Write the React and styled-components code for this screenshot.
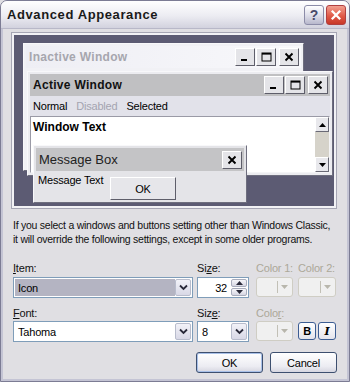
import React from 'react'
import styled, { createGlobalStyle } from 'styled-components'

const GlobalStyle = createGlobalStyle`
  html, body { margin: 0; padding: 0; background: #e0dfe3; }
  body { font-family: "Liberation Sans", Arial, sans-serif; font-size: 11px; letter-spacing: -0.2px; color: #000; }
  * { box-sizing: border-box; }
`

const Dialog = styled.div`
  width: 350px;
  height: 382px;
  display: flex;
  flex-direction: column;
  background: #e0dfe3;
  border: 1px solid #7c7c94;
  border-radius: 7px 7px 0 0;
  box-shadow: inset 2px 0 0 #c4c4d4, inset -2px 0 0 #c4c4d4, inset 0 -2px 0 #c4c4d4;
  overflow: hidden;
`

const TitleBar = styled.div`
  height: 28px;
  display: flex;
  align-items: center;
  padding: 0 3px 0 6px;
  background: linear-gradient(#ffffff, #ececf2 55%, #d2d2de);
  border-bottom: 1px solid #b8b8c8;
`

const Title = styled.div`
  flex: 1;
  font-weight: bold;
  font-size: 13px;
  letter-spacing: 0.6px;
  color: #1a1a1a;
`

const CaptionButton = styled.div`
  width: 20px;
  height: 20px;
  margin-left: 2px;
  border-radius: 3px;
  display: flex;
  align-items: center;
  justify-content: center;
  border: 1px solid ${p => (p.$close ? '#b04040' : '#8c8ca8')};
  background: ${p =>
    p.$close
      ? 'linear-gradient(#f2a090, #e05a48 55%, #c83828)'
      : 'linear-gradient(#ffffff, #dcdce8 55%, #b8b8cc)'};
  color: ${p => (p.$close ? '#fff' : '#4a4a6a')};
  font-weight: bold;
  font-size: 14px;
`

const Body = styled.div`
  flex: 1;
  display: flex;
  flex-direction: column;
  padding: 3px 12px 0 10px;
`

const Preview = styled.div`
  height: 177px;
  border: 1px solid #a6a6b4;
  padding: 2px;
  background: #f2f2f5;
  display: flex;
`

const Desktop = styled.div`
  flex: 1;
  position: relative;
  background: #5c5b73;
  overflow: hidden;
`

const Win = styled.div`
  position: absolute;
  display: flex;
  flex-direction: column;
  padding: 2px;
  border: 1px solid;
  border-color: #f8f8fa #6e6e7e #6e6e7e #f8f8fa;
  background: ${p => p.$bg};
`

const WinTitle = styled.div`
  height: ${p => p.$h}px;
  display: flex;
  align-items: center;
  padding: 0 2px 0 3px;
  background: ${p => p.$bg};
  color: ${p => p.$color};
  font-weight: ${p => (p.$bold ? 'bold' : 'normal')};
  font-size: ${p => p.$size}px;
  letter-spacing: ${p => (p.$bold ? '0.3px' : '0')};
`

const WinTitleText = styled.div`
  flex: 1;
`

const WinButtons = styled.div`
  display: flex;
  gap: 1px;
`

const WinButton = styled.div`
  width: 20px;
  height: 18px;
  display: flex;
  align-items: center;
  justify-content: center;
  background: #e4e4e8;
  border: 1px solid;
  border-color: #ffffff #5e5e6a #5e5e6a #ffffff;
  margin-left: ${p => (p.$gap ? 2 : 0)}px;
`

const MenuRow = styled.div`
  height: 20px;
  display: flex;
  align-items: center;
  gap: 9px;
  padding-left: 3px;
  background: #e2e2ea;
`

const MenuItem = styled.span`
  color: ${p => (p.$disabled ? '#a4a4b0' : '#000')};
`

const TextArea = styled.div`
  flex: 1;
  display: flex;
  background: #fff;
  border: 1px solid;
  border-color: #9a9aa6 #f4f4f6 #f4f4f6 #9a9aa6;
`

const TextContent = styled.div`
  flex: 1;
  padding: 3px 2px;
  font-weight: bold;
  font-size: 12px;
  letter-spacing: 0;
`

const ScrollBar = styled.div`
  width: 14px;
  display: flex;
  flex-direction: column;
  justify-content: space-between;
  background: #d6d3ca;
`

const ScrollArrow = styled.div`
  height: 15px;
  display: flex;
  align-items: center;
  justify-content: center;
  background: #e8e8ec;
  border: 1px solid;
  border-color: #ffffff #6a6a76 #6a6a76 #ffffff;
`

const MsgContent = styled.div`
  flex: 1;
  display: flex;
  padding: 3px 2px 0 2px;
`

const MsgText = styled.div`
  width: 72px;
`

const PreviewOk = styled.div`
  width: 66px;
  height: 23px;
  margin-top: 3px;
  display: flex;
  align-items: center;
  justify-content: center;
  background: #e6e6ea;
  border: 1px solid;
  border-color: #ffffff #5e5e6a #5e5e6a #ffffff;
`

const Description = styled.div`
  margin-top: 9px;
  padding-left: 2px;
  line-height: 14px;
  font-size: 10.5px;
  letter-spacing: -0.25px;
  white-space: nowrap;
  color: #111;
`

const Form = styled.div`
  margin-top: 16px;
  padding-left: 2px;
  display: grid;
  grid-template-columns: 184px 59px 42px 40px;
  grid-template-rows: 15px 21px 9px 14px 21px;
`

const Label = styled.div`
  line-height: 13px;
  color: ${p => (p.$disabled ? '#aca899' : '#111')};
`

const Combo = styled.div`
  width: ${p => p.$w}px;
  height: 21px;
  display: flex;
  border: 1px solid #7f9db9;
  background: #fff;
  padding: 1px;
`

const ComboField = styled.div`
  flex: 1;
  display: flex;
  align-items: center;
  justify-content: ${p => (p.$right ? 'flex-end' : 'flex-start')};
  padding: 0 ${p => (p.$right ? 4 : 3)}px;
  background: ${p => (p.$selected ? '#b4b4c2' : '#fff')};
`

const DropButton = styled.div`
  width: 16px;
  display: flex;
  align-items: center;
  justify-content: center;
  border: 1px solid #b8bccc;
  border-radius: 2px;
  background: linear-gradient(#f2f2f8, #d8d8e6);
`

const SpinColumn = styled.div`
  width: 16px;
  display: flex;
  flex-direction: column;
  gap: 1px;
`

const SpinButton = styled.div`
  flex: 1;
  display: flex;
  align-items: center;
  justify-content: center;
  border: 1px solid #a8acbc;
  border-radius: 2px;
  background: linear-gradient(#f6f6fa, #d6d6e2);
`

const ColorButton = styled.div`
  width: ${p => p.$w}px;
  height: 20px;
  display: flex;
  align-items: center;
  justify-content: flex-end;
  gap: 3px;
  padding-right: 4px;
  border: 1px solid #cfcdc4;
  border-radius: 3px;
  background: #f0f0f0;
`

const ColorDivider = styled.div`
  width: 1px;
  height: 12px;
  background: #c2c0b6;
`

const StyleButtons = styled.div`
  display: flex;
  gap: 2px;
  margin-left: 5px;
  margin-top: 1px;
`

const StyleButton = styled.div`
  width: 18px;
  height: 18px;
  display: flex;
  align-items: center;
  justify-content: center;
  border: 1px solid #3c5d93;
  border-radius: 3px;
  background: linear-gradient(#ffffff, #e4e4ec);
  font-family: ${p => (p.$italic ? '"DejaVu Serif", serif' : '"Liberation Sans", Arial, sans-serif')};
  font-weight: bold;
  font-style: ${p => (p.$italic ? 'italic' : 'normal')};
  font-size: 11px;
`

const Cell = styled.div`
  grid-column: ${p => p.$col};
  grid-row: ${p => p.$row};
  display: flex;
`

const Footer = styled.div`
  margin-top: 10px;
  display: flex;
  justify-content: flex-end;
  gap: 7px;
`

const PushButton = styled.div`
  width: 67px;
  height: 21px;
  display: flex;
  align-items: center;
  justify-content: center;
  border: 1px solid #3d4f6f;
  border-radius: 3px;
  background: linear-gradient(#ffffff, #ececf2 70%, #d6d6e0);
  box-shadow: ${p => (p.$default ? 'inset 0 0 0 1px #a8c0e8' : 'none')};
`

const Underline = styled.span`
  text-decoration: underline;
`

const Chevron = () => (
  <svg width="9" height="7" viewBox="0 0 9 7">
    <path d="M1 1.5 L4.5 5 L8 1.5" fill="none" stroke="#2a2a3a" strokeWidth="1.8" />
  </svg>
)

const SmallArrow = ({ up, color = '#000' }) => (
  <svg width="7" height="4" viewBox="0 0 7 4">
    <path d={up ? 'M0 4 L3.5 0 L7 4 Z' : 'M0 0 L3.5 4 L7 0 Z'} fill={color} />
  </svg>
)

const MinIcon = () => (
  <svg width="10" height="10" viewBox="0 0 10 10">
    <rect x="1" y="7" width="6" height="2" fill="#000" />
  </svg>
)

const MaxIcon = () => (
  <svg width="11" height="10" viewBox="0 0 11 10">
    <rect x="1" y="1" width="9" height="8" fill="none" stroke="#000" strokeWidth="1" />
    <rect x="1" y="1" width="9" height="1.6" fill="#000" />
  </svg>
)

const CloseIcon = ({ color = '#000', size = 10 }) => (
  <svg width={size} height={size} viewBox="0 0 10 10">
    <path d="M1.5 1.5 L8.5 8.5 M8.5 1.5 L1.5 8.5" stroke={color} strokeWidth="1.9" />
  </svg>
)

const WindowButtons = () => (
  <WinButtons>
    <WinButton><MinIcon /></WinButton>
    <WinButton><MaxIcon /></WinButton>
    <WinButton $gap><CloseIcon /></WinButton>
  </WinButtons>
)

const App = () => {
  return (
    <Dialog>
      <GlobalStyle />
      <TitleBar>
        <Title>Advanced Appearance</Title>
        <CaptionButton>?</CaptionButton>
        <CaptionButton $close><CloseIcon color="#fff" size={12} /></CaptionButton>
      </TitleBar>
      <Body>
        <Preview>
          <Desktop>
            <Win $bg="#f1f1f5" style={{ left: 9, top: 8, width: 281, height: 128 }}>
              <WinTitle $h={22} $bg="linear-gradient(90deg, #eeeef4, #f8f8fb)" $color="#a6a6ae" $bold $size={12}>
                <WinTitleText>Inactive Window</WinTitleText>
                <WindowButtons />
              </WinTitle>
            </Win>
            <Win $bg="#ececf0" style={{ left: 13, top: 36, width: 306, height: 105 }}>
              <WinTitle $h={22} $bg="#c0c0c2" $color="#111" $bold $size={12}>
                <WinTitleText>Active Window</WinTitleText>
                <WindowButtons />
              </WinTitle>
              <MenuRow>
                <MenuItem>Normal</MenuItem>
                <MenuItem $disabled>Disabled</MenuItem>
                <MenuItem>Selected</MenuItem>
              </MenuRow>
              <TextArea>
                <TextContent>Window Text</TextContent>
                <ScrollBar>
                  <ScrollArrow><SmallArrow up /></ScrollArrow>
                  <ScrollArrow><SmallArrow /></ScrollArrow>
                </ScrollBar>
              </TextArea>
            </Win>
            <Win $bg="#e4e4e8" style={{ left: 19, top: 110, width: 214, height: 58 }}>
              <WinTitle $h={23} $bg="#c4c4c6" $color="#222" $size={13}>
                <WinTitleText>Message Box</WinTitleText>
                <WinButton><CloseIcon /></WinButton>
              </WinTitle>
              <MsgContent>
                <MsgText>Message Text</MsgText>
                <PreviewOk>OK</PreviewOk>
              </MsgContent>
            </Win>
          </Desktop>
        </Preview>
        <Description>
          If you select a windows and buttons setting other than Windows Classic,
          <br />
          it will override the following settings, except in some older programs.
        </Description>
        <Form>
          <Cell $col={1} $row={1}><Label><Underline>I</Underline>tem:</Label></Cell>
          <Cell $col={2} $row={1}><Label>Si<Underline>z</Underline>e:</Label></Cell>
          <Cell $col={3} $row={1}><Label $disabled>Color 1:</Label></Cell>
          <Cell $col={4} $row={1}><Label $disabled>Color 2:</Label></Cell>

          <Cell $col={1} $row={2}>
            <Combo $w={180}>
              <ComboField $selected>Icon</ComboField>
              <DropButton><Chevron /></DropButton>
            </Combo>
          </Cell>
          <Cell $col={2} $row={2}>
            <Combo $w={52}>
              <ComboField $right>32</ComboField>
              <SpinColumn>
                <SpinButton><SmallArrow up color="#2a2a3a" /></SpinButton>
                <SpinButton><SmallArrow color="#2a2a3a" /></SpinButton>
              </SpinColumn>
            </Combo>
          </Cell>
          <Cell $col={3} $row={2}>
            <ColorButton $w={37}><ColorDivider /><SmallArrow color="#b8b6ac" /></ColorButton>
          </Cell>
          <Cell $col={4} $row={2}>
            <ColorButton $w={38}><ColorDivider /><SmallArrow color="#b8b6ac" /></ColorButton>
          </Cell>

          <Cell $col={1} $row={4}><Label><Underline>F</Underline>ont:</Label></Cell>
          <Cell $col={2} $row={4}><Label>Siz<Underline>e</Underline>:</Label></Cell>
          <Cell $col={3} $row={4}><Label $disabled>Colo<Underline>r</Underline>:</Label></Cell>

          <Cell $col={1} $row={5}>
            <Combo $w={180}>
              <ComboField>Tahoma</ComboField>
              <DropButton><Chevron /></DropButton>
            </Combo>
          </Cell>
          <Cell $col={2} $row={5}>
            <Combo $w={52}>
              <ComboField>8</ComboField>
              <DropButton><Chevron /></DropButton>
            </Combo>
          </Cell>
          <Cell $col="3 / span 2" $row={5}>
            <ColorButton $w={37}><ColorDivider /><SmallArrow color="#b8b6ac" /></ColorButton>
            <StyleButtons>
              <StyleButton>B</StyleButton>
              <StyleButton $italic>I</StyleButton>
            </StyleButtons>
          </Cell>
        </Form>
        <Footer>
          <PushButton $default>OK</PushButton>
          <PushButton>Cancel</PushButton>
        </Footer>
      </Body>
    </Dialog>
  )
}

export default App
